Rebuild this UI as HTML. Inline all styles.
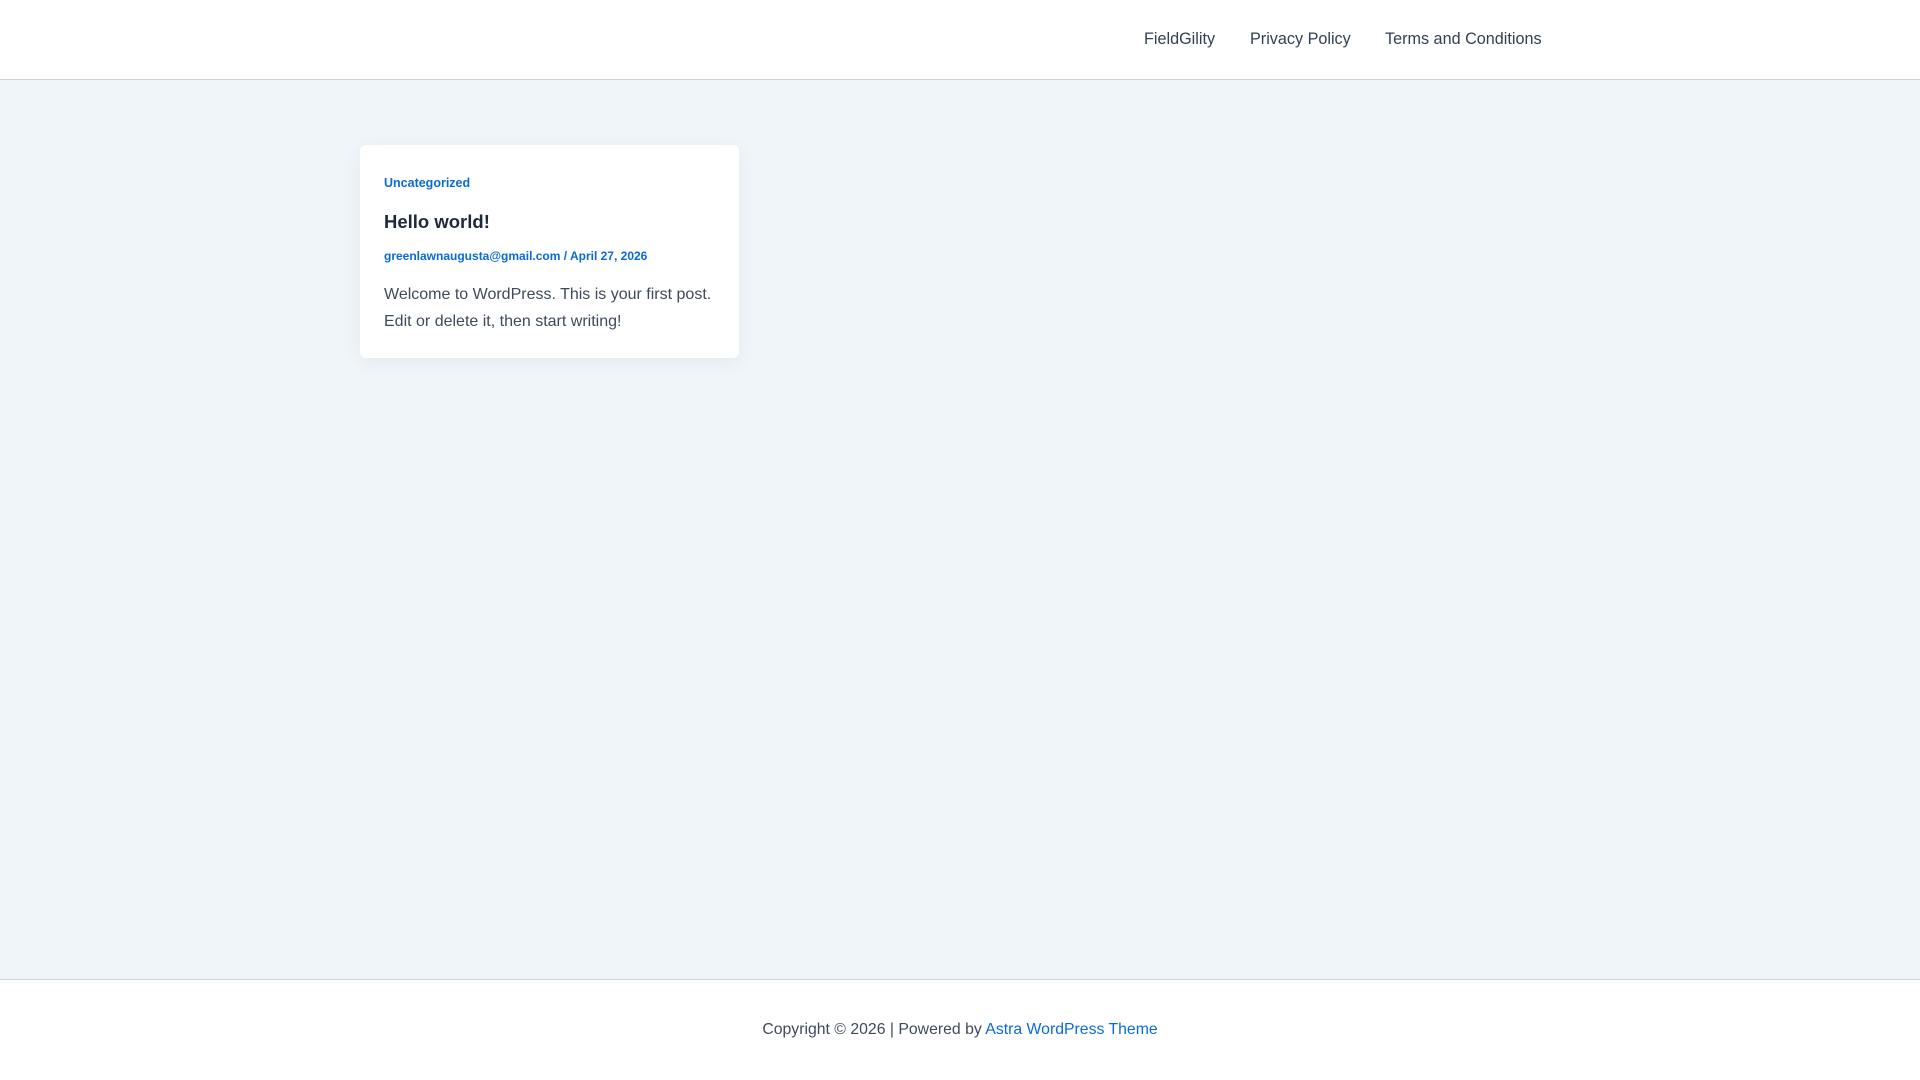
<!DOCTYPE html>
<html><head><meta charset="utf-8"><style>
*{margin:0;padding:0;box-sizing:border-box}
body{width:1920px;height:1080px;position:relative;background:#f0f5fa;font-family:"Liberation Sans",sans-serif;overflow:hidden}
.hdr{position:absolute;left:0;top:0;width:1920px;height:80px;background:#fff;border-bottom:1px solid #d1d5db}
.nav{position:absolute;top:0;font-size:16.2px;color:#334155;line-height:78px;white-space:nowrap}
.card{position:absolute;left:360px;top:145px;width:379px;height:213px;background:#fff;border-radius:6px;box-shadow:0 4px 20px rgba(0,0,0,0.05)}
.t{position:absolute;white-space:nowrap}
.ftr{position:absolute;left:0;top:979px;width:1920px;height:101px;background:#fff;border-top:1px solid #d1d5db}
</style></head><body>
<div class="hdr">
<span class="nav" style="left:1144px">FieldGility</span>
<span class="nav" style="left:1250px">Privacy Policy</span>
<span class="nav" style="left:1385px">Terms and Conditions</span>
</div>
<div class="card"></div>
<div class="t" style="left:384px;top:176px;font-size:12.5px;font-weight:bold;color:#0a6ad8;line-height:15px">Uncategorized</div>
<div class="t" style="left:384px;top:211px;font-size:18.5px;font-weight:bold;color:#1e293b;line-height:22px">Hello world!</div>
<div class="t" style="left:384px;top:249px;font-size:12px;font-weight:bold;color:#0a6ad8;line-height:15px">greenlawnaugusta@gmail.com / April 27, 2026</div>
<div class="t" style="left:384px;top:281px;font-size:16px;color:#3f4a5c;line-height:27px">Welcome to WordPress. This is your first post.<br>Edit or delete it, then start writing!</div>
<div class="ftr"><div class="t" style="left:0;width:1920px;text-align:center;top:40px;font-size:15.8px;color:#3f4a5c;line-height:20px">Copyright © 2026 | Powered by <span style="color:#0a6ad8">Astra WordPress Theme</span></div></div>
</body></html>
